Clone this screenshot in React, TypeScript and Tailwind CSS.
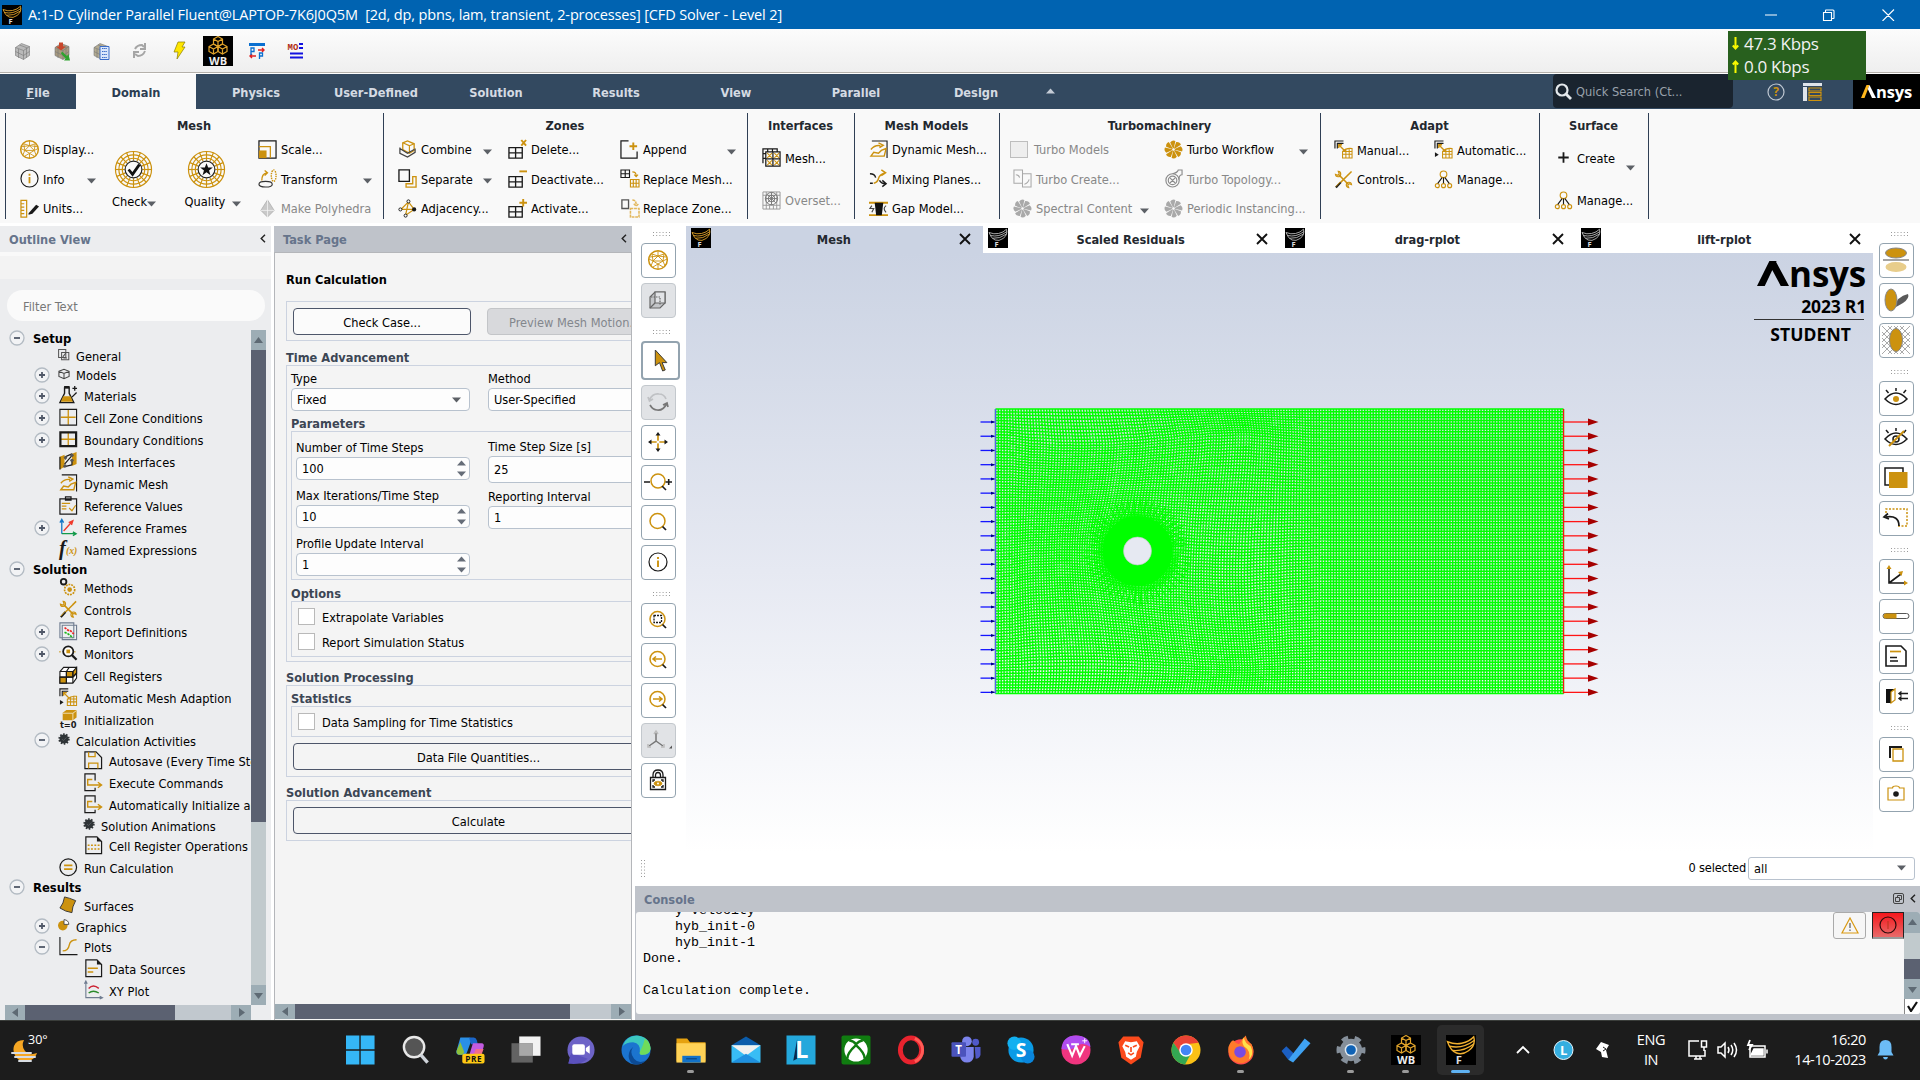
import React, { useMemo } from "react";

const G = "#cc920f";
const K = "#1a1a1a";

/* ---------- icon drawings, 20x20 box unless stated otherwise ---------- */
const Fan = ({ c }: { c: string }) => (
  <g fill={c}>
    {[0, 45, 90, 135, 180, 225, 270, 315].map((a) => (
      <path key={a} d="M10 10 L6.5 2.5 Q9 -0.5 12 1 Z" transform={`rotate(${a} 10 10)`} />
    ))}
    <circle cx="10" cy="10" r="1.3" fill="#f9f9f9" />
  </g>
);

const Web = ({ c = G }: { c?: string }) => (
  <g fill="none" stroke={c} strokeWidth="1.2">
    <circle cx="20" cy="20" r="18.5" />
    <circle cx="20" cy="20" r="15" />
    <circle cx="20" cy="20" r="11.5" />
    {Array.from({ length: 16 }, (_, i) => (
      <path key={i} d="M20 1.5 V11" transform={`rotate(${i * 22.5} 20 20)`} />
    ))}
    <circle cx="20" cy="20" r="8.6" fill="#fafafa" stroke="#222" />
  </g>
);

const Grid4 = (
  <path d="M1 8h14v11H1zM8 8v11M1 13.5h14" fill="none" stroke={K} strokeWidth="1.4" />
);

const AdaptShape = (
  <g fill="none">
    <path d="M1 9V1h9M3.5 9V3.5H10" stroke={K} strokeWidth="1.2" />
    <path d="M5 5l6 6M5 8.500V5h3.500" stroke={G} strokeWidth="1.4" />
    <path d="M9 19v-7q4-4 10-3v10zM9 15h10M12.500 9.500V19M16 8.500V19M9 12h10" stroke={G} strokeWidth="1.1" />
  </g>
);

const Tree3 = (
  <g fill="none" stroke={G} strokeWidth="1.2">
    <circle cx="10" cy="4.500" r="3.500" />
    <circle cx="3.500" cy="16.500" r="2.100" />
    <circle cx="10" cy="16.500" r="2.100" />
    <circle cx="16.500" cy="16.500" r="2.100" />
    <path d="M8.500 8L4 14M10 8v6M11.500 8L16 14" stroke={K} />
  </g>
);

const Tools = (
  <g fill="none" stroke={G} strokeWidth="1.6">
    <path d="M5 5l10 10M15.500 4.500L7 13" />
    <path d="M1.500 4.500a2.800 2.800 0 1 0 3-3l1 2.500-1.500 1.500zM18.500 15.500a2.800 2.800 0 1 0-3 3l-1-2.500 1.500-1.500z" strokeWidth="1.200" />
    <path d="M15 5l3.500-3.500" />
    <path d="M7 13l-5 5.500" stroke={K} strokeWidth="2.200" />
    <path d="M6.500 12.500l-4.500 5" stroke={G} strokeWidth="1" />
  </g>
);

const Bird = ({ c }: { c: string }) => (
  <g>
    <rect width="20" height="20" fill="#000" />
    <g fill="none" stroke={c} strokeWidth=".9">
      <path d="M1 4.500Q6 6.500 10.500 5.500Q15.500 4.500 18.500 1.200Q20 7 15 10.500Q11 13.500 7 12Q3 10.500 1 4.500z" />
      <path d="M2.500 7.500Q11 9.500 19 3.500M4.500 10.300Q12 11 18.500 6" />
    </g>
    <text x="6.500" y="19.300" fontSize="7.500" fontWeight="700" fill="#ddd" fontFamily="Open Sans, sans-serif">F</text>
  </g>
);

const Lens = (
  <g fill="none">
    <circle cx="9.500" cy="9" r="7.500" stroke={G} strokeWidth="1.500" />
    <path d="M14.500 14.500l3.500 3.500" stroke={K} strokeWidth="1.700" />
  </g>
);

const BallMesh = (
  <g fill="none" stroke={G}>
    <circle cx="10" cy="10" r="9.300" strokeWidth="1.500" />
    <path strokeWidth=".9" d="M4 4l6 2 6-2M10 1v5l-5 5-4-2M10 6l5 5 4-2M5 11l5 3 5-3H5M5 11l-2 5M15 11l2 5M10 14v5M10 14l-5 3M10 14l5 3M4 4l1 7M16 4l-1 7M2 7l8-1 8 1" />
  </g>
);

const DocFrame = <path d="M2 1h12l5 5v13H2z" fill="none" stroke={K} strokeWidth="1.300" />;
const Gear = (
  <g>
    <circle cx="10" cy="10" r="7.500" fill="#2f3437" />
    <circle cx="10" cy="10" r="8" fill="none" stroke="#2f3437" strokeWidth="3" strokeDasharray="2.600 2.426" />
    <path d="M6.500 10l2.500 2.500 5-5" stroke="#6b7175" strokeWidth="1" fill="none" />
  </g>
);

const DynMesh = (
  <g fill="none">
    <path d="M3 1h16v18" stroke={K} strokeWidth="1.200" />
    <path d="M2 10Q6 5 12 6M10 3l5 2.500L11 8M2 17L5 13l5 1 3-3 5-2-2 8z" stroke={G} strokeWidth="1.500" />
  </g>
);

const ICONS: Record<string, React.ReactNode> = {
  ball: BallMesh,
  info: (
    <g fill="none">
      <circle cx="10" cy="10" r="9" stroke={K} strokeWidth="1.200" />
      <path d="M10 8.500V15M10 5v2" stroke={G} strokeWidth="1.900" />
    </g>
  ),
  units: (
    <g fill="none">
      <path d="M1 1.500h6v17.500H1zM1 5h3.500M1 8.500h3.500M1 12h3.500M1 15.500h3.500" stroke={G} strokeWidth="1.300" />
      <path d="M9 15l8-9 3 2-7 7.500-4 1z" fill={K} />
    </g>
  ),
  scale: (
    <g fill="none">
      <path d="M1 1h18v18H1z" stroke={K} strokeWidth="1.300" />
      <path d="M1 7h12v12" stroke={G} strokeWidth="1.300" />
      <path d="M1 11h8v8H1z" fill={G} />
    </g>
  ),
  transform: (
    <g fill="none">
      <ellipse cx="8" cy="16" rx="7" ry="3" stroke="#333" strokeWidth="1.200" />
      <path d="M4 12Q4 5 9 4M7 1.500L10 4 7 7" stroke={G} strokeWidth="1.400" />
      <ellipse cx="16.500" cy="7" rx="2.500" ry="6" stroke={G} strokeWidth="1.500" strokeDasharray="1.500 1" />
    </g>
  ),
  poly: (
    <g stroke="#aaa" strokeWidth=".8">
      <path d="M10 1l7 11-7 7-7-7z" fill="#c9c9c9" />
      <path d="M10 1v18M3 12h14" fill="none" stroke="#f5f5f5" />
    </g>
  ),
  combine: (
    <g fill="none">
      <path d="M5 3l5-2 7 3v7l-5 3-7-4z" stroke={G} strokeWidth="1.400" />
      <path d="M5 3l7 3v7M12 6l5-2" stroke={G} strokeWidth="1.200" />
      <path d="M2 8v6l8 4 8-5v-4M2 9l8 5 7-4" stroke="#444" strokeWidth="1.300" />
    </g>
  ),
  separate: (
    <g fill="none">
      <path d="M1 1h11v12H1z" stroke={K} strokeWidth="1.400" />
      <path d="M15.500 8h3.500v11H8.500v-3.500h7z" stroke={G} strokeWidth="1.400" />
    </g>
  ),
  adjacency: (
    <g fill="none">
      <path d="M3 11h14M11 3L8 17M3 11l8-8 6 8-9 6" stroke={G} strokeWidth="1.300" />
      <g stroke={K} fill="#fff"><circle cx="2.500" cy="11" r="1.600" /><circle cx="11" cy="2.500" r="1.600" /><circle cx="8" cy="17.500" r="1.600" /></g>
      <circle cx="17" cy="11" r="2.200" fill={K} />
    </g>
  ),
  del: <g>{Grid4}<path d="M14 0l5 6M19 0l-5 6" stroke={G} strokeWidth="2" /></g>,
  deact: <g>{Grid4}<path d="M12 2.500h8" stroke={G} strokeWidth="2" /></g>,
  act: <g>{Grid4}<path d="M12 4h8M16 0v8" stroke={G} strokeWidth="2" /></g>,
  append: (
    <g fill="none">
      <path d="M9 1H1v18h17v-7" stroke={K} strokeWidth="1.300" />
      <path d="M10 6.500h8M14 2.500v8" stroke={G} strokeWidth="2" />
    </g>
  ),
  repmesh: (
    <g fill="none">
      <path d="M1 1h9v8H1zM5.500 1v8M1 5h9" stroke={K} strokeWidth="1.200" />
      <path d="M11 11h9v8h-9zM14 11v8M17 11v8M11 15h9M13 3q4 0 4 4M15 6l2 2 2-2" stroke={G} strokeWidth="1.200" />
    </g>
  ),
  repzone: (
    <g fill="none">
      <path d="M2 1h7v9H2z" stroke="#555" strokeWidth="1.400" />
      <path d="M13 1v0q4 0 4 5M14.500 5l2.500 2.500L19.500 5M11 10h9v9h-9z" stroke="#e2b75c" strokeWidth="1.600" strokeDasharray="3 .8" />
    </g>
  ),
  imesh: (
    <g fill="none">
      <path d="M1 16V1h15v3M4 4h15v15H4zM11.500 4v15M4 11.500h15M1 6h3M1 11h3M6 1v3M11 1v3" stroke={K} strokeWidth="1.300" />
      <path d="M5.500 5.500l5 5M10.500 5.500l-5 5M13 5.500l5 5M18 5.500l-5 5M5.500 13l5 5M10.500 13l-5 5M13 13l5 5M18 13l-5 5" stroke={G} strokeWidth="1.100" />
    </g>
  ),
  overset: (
    <g fill="none" stroke="#777" strokeWidth="1">
      <path d="M1 1h18v18H1zM1 4.500h18M1 15h18M4.500 1v18M8 15v4M12 15v4M15.500 1v18" stroke="#999" />
      <circle cx="10" cy="8" r="6.500" /><circle cx="10" cy="8" r="3.500" />
      <path d="M10 1.500v13M3.500 8h13M5.500 3.500l9 9M14.500 3.500l-9 9" />
    </g>
  ),
  dyn: DynMesh,
  mixing: (
    <g fill="none">
      <path d="M5 15q4-1 5-5t7-6M13 1l4.500 3-4.500 3" stroke={G} strokeWidth="1.500" />
      <path d="M1 5q5 0 6 4M11 12q2 3.500 6 3.500M14 12l4 3.500-4 3M1 15h3" stroke={K} strokeWidth="1.500" />
    </g>
  ),
  gap: (
    <g>
      <path d="M0 4h20M0 17h20" stroke={G} strokeWidth="2" />
      <path d="M6 4h9l-1.500 13h-6z" fill="#111" />
      <path d="M3 7l-2 3h4l-2 4M18 7q-4 3 0 7" stroke="#444" fill="none" strokeWidth="1.200" />
    </g>
  ),
  tcreate: (
    <g fill="none" stroke="#a9a9a9" strokeWidth="1.100">
      <path d="M1 1h9v14H1zM10 5h9v14h-9zM3 6q3 0 4 3M12 16q4-1 5-5" />
    </g>
  ),
  fanGray: <Fan c="#a9a9a9" />,
  fanGold: <Fan c={G} />,
  topo: (
    <g fill="none" stroke="#8b8b8b" strokeWidth="1.200">
      <ellipse cx="9" cy="12" rx="7" ry="7" /><circle cx="9" cy="12" r="4.500" />
      <path d="M9 5q5-1 6-4h4v5q-3 0-3.500 5M6 9l6 6M12 9l-6 6" />
    </g>
  ),
  adapt: AdaptShape,
  adaptAuto: <g>{AdaptShape}<path d="M1 13l4 2.500L1 18z" fill={K} /></g>,
  tools: Tools,
  tree3: Tree3,
  plus: <path d="M10 4.500v11M4.500 10h11" stroke={K} strokeWidth="1.900" />,
  general: (
    <g fill="none" stroke="#555" strokeWidth="1.700">
      <path d="M1 1h12v13H1zM6 6h12v12H6z" /><path d="M8 13l5-6M9 15h6" />
    </g>
  ),
  models: (
    <g fill="none" stroke="#444" strokeWidth="1.700">
      <path d="M1.500 5.500L10 2l8.500 3.500v8.500L10 18l-8.500-4zM1.500 5.500L10 9l8.500-3.500M10 9v9" />
    </g>
  ),
  materials: (
    <g fill="none">
      <path d="M6 2h5v6l5 10H1L6 8z" stroke={K} strokeWidth="1.500" />
      <path d="M4.500 11h8L15 17H2z" fill={G} />
      <path d="M5.500 0h6v2.500h-6z" fill={K} />
      <path d="M17 0v5M14.500 2.500h5M19 7l-5 5" stroke={K} strokeWidth="1.400" />
    </g>
  ),
  cellzone: (
    <g fill="none"><path d="M10 2v16M2 10h16" stroke={G} strokeWidth="1.400" /><path d="M1 1.500h18v17H1z" stroke={K} strokeWidth="1.200" /></g>
  ),
  boundary: (
    <g fill="none"><path d="M10 2v16M2 10h16" stroke={G} strokeWidth="1.400" /><path d="M1.500 2.500h17v15h-17z" stroke={K} strokeWidth="2.400" /></g>
  ),
  meshint: (
    <g>
      <path d="M1 5l5-2v13l-5 3zM14 2l5-2v13l-5 2z" fill={G} />
      <path d="M1 5v14M5 16l9-2M7 8V5l7-3M6 13L14 4M14 8v6" stroke={K} strokeWidth="1.300" fill="none" />
      <g fill="#555"><circle cx="7" cy="6" r="1.800" /><circle cx="14" cy="3.500" r="1.800" /><circle cx="6.500" cy="15" r="1.800" /><circle cx="14" cy="9" r="1.800" /></g>
    </g>
  ),
  refval: (
    <g fill="none">
      <path d="M1 3h18v16.500H1zM7 1h6v3.500H7z" stroke={K} strokeWidth="1.300" />
      <path d="M3 8h9M3 11h5M3 14h5M11 13l3 3 4-6" stroke={G} strokeWidth="1.300" />
    </g>
  ),
  frames: (
    <g fill="none" strokeWidth="1.400">
      <path d="M3 17V3M1 5l2-3.500L5 5" stroke="#1578c8" />
      <path d="M3 17h14M15 15l3.500 2-3.500 2" stroke="#129a4a" />
      <path d="M5 14L14 4M10.500 5L15 3l-1.500 4.500" stroke="#f0392b" />
    </g>
  ),
  fx: (
    <g fontFamily="Liberation Serif, serif" fontStyle="italic">
      <text x="0" y="16" fontSize="22" fontWeight="700" fill={K}>f</text>
      <text x="7.500" y="15" fontSize="10.500" fontWeight="700" fill={G}>(x)</text>
    </g>
  ),
  methods: (
    <g fill="none">
      <circle cx="5" cy="4" r="3" stroke={K} strokeWidth="2" />
      <circle cx="11.500" cy="12.500" r="5.500" stroke={G} strokeWidth="1.800" strokeDasharray="2 1" />
      <circle cx="11.500" cy="12.500" r="2.500" fill={G} />
    </g>
  ),
  report: (
    <g fill="none">
      <path d="M1 1h15v16H1zM3.500 3.500H19V19H3.500z" fill="#eef0f2" stroke="#6f7c90" strokeWidth="1.200" />
      <path d="M6 6l4 3 2 0 4 4" stroke="#ee2222" strokeWidth="1.800" strokeDasharray="2.500 1" />
      <path d="M6 11l4 2 5 4" stroke="#1eb51e" strokeWidth="1.800" strokeDasharray="2.500 1" />
    </g>
  ),
  monitors: (
    <g fill="none">
      <path d="M0 8.500h20" stroke={G} strokeWidth="1" strokeDasharray="2 2" />
      <circle cx="10" cy="8" r="5.500" fill="#fff" stroke={K} strokeWidth="1.900" />
      <path d="M14 12l5 5" stroke={K} strokeWidth="2.400" /><path d="M8 6h4v4H8z" fill={G} />
    </g>
  ),
  cellreg: (
    <g stroke={K} strokeWidth="1.200">
      <path d="M1 6l4-4.500h14V13l-4 5.500H1z" fill="#fff" />
      <path d="M8 6h7v6H8zM1 12h7v6.500H1zM15 6l4-4.500V8l-4 4z" fill={G} />
      <path d="M1 6h14v12.500M8 6v12.500M1 12h14M8 6l3-4.500M15 12l4-4.500" fill="none" />
    </g>
  ),
  init: (
    <g>
      <path d="M4 3l4-3h11v8l-4 3H4z" fill={G} /><path d="M4 3.500h11l4-3M15 3.500V11" stroke="#f2e2b8" fill="none" />
      <text x="1" y="19.500" fontSize="9" fontWeight="700" fill={K} fontFamily="DejaVu Sans, sans-serif" textLength="18">t=0</text>
    </g>
  ),
  gear: Gear,
  save: (
    <g fill="none"><path d="M1 1h12l6 6v12H1z" stroke={K} strokeWidth="1.300" /><path d="M5 1v5h7V1M5 19v-6h10v6" stroke={G} strokeWidth="1.400" /></g>
  ),
  exec: (
    <g fill="none"><path d="M12 8V1H1v18h11v-3" stroke={K} strokeWidth="1.300" /><path d="M9 7H4v6h14M15 10l4 3-4 3" stroke={G} strokeWidth="1.500" /></g>
  ),
  cellops: (
    <g>{DocFrame}<path d="M14 1l5 5h-5z" fill={K} /><path d="M4 10h13M4 14h13" stroke={G} strokeWidth="1.600" strokeDasharray="2 1.600" /></g>
  ),
  run: (
    <g fill="none"><circle cx="10" cy="10" r="9" stroke={K} strokeWidth="1.300" /><path d="M5.500 8h9M5.500 12h9" stroke={G} strokeWidth="1.900" /></g>
  ),
  surfaces: <path d="M6 1q5 1 12 4-4 7-4 13-7-1-13-5Q5 8 6 1z" fill={G} stroke="#333" strokeWidth="1" />,
  graphics: (
    <g><circle cx="8" cy="11" r="8" fill={G} /><path d="M10 1v8h8q0-7-8-8z" fill="#fff" stroke="#444" strokeWidth="1.500" /></g>
  ),
  plots: (
    <g fill="none"><path d="M1 0v19h19" stroke={K} strokeWidth="1.200" /><path d="M4 15q6 0 7-6t8-6" stroke={G} strokeWidth="1.500" /></g>
  ),
  datasrc: <g>{DocFrame}<path d="M14 1l5 5h-5z" fill={K} /><path d="M4 10h11M4 14h6" stroke={G} strokeWidth="1.700" /></g>,
  xy: (
    <g fill="none">
      <path d="M2 1v17h17M.5 3L2 0l1.500 3M17 16.500l3 1.500-3 1.500" stroke="#6f7c90" strokeWidth="1.200" />
      <path d="M5 8q5-5 11 0" stroke="#c23" strokeWidth="1.500" /><path d="M5 13q5-4 11 0" stroke="#2a8a2a" strokeWidth="1.500" />
    </g>
  ),
  cube: (
    <g fill="none" stroke="#666" strokeWidth="1.200">
      <path d="M2 7v11h10l5-5V2H7z" fill="#c4c6c9" /><path d="M7 2h10v11H7z" fill="#e1e3e6" /><path d="M2 18l5-5" /><path d="M3 7h9v8" strokeDasharray="1.500 1" />
    </g>
  ),
  cursor: <path d="M6 0v15l4-3 3 8 2.500-1-3-7H17z" fill={G} stroke="#333" strokeWidth=".9" />,
  rotate: (
    <g fill="none" strokeWidth="1.700"><path d="M1.500 7.500Q5 1 11 2q5 0 7 5M0 5l1.500 4L5 7" stroke="#bfc1c4" /><path d="M18.500 12Q15 19 9 18q-4 0-7-5M15 13l4-2 1 4" stroke="#777" /></g>
  ),
  move: (
    <g><path d="M10 3v14M3 10h14" stroke={G} strokeWidth="1.700" /><circle cx="10" cy="10" r="1.500" fill="#fff" /><path d="M10 0l2.500 3.500h-5zM10 20l2.500-3.500h-5zM0 10l3.500-2.500v5zM20 10l-3.500-2.500v5z" fill={K} /></g>
  ),
  zoomio: (
    <g fill="none"><circle cx="10" cy="9" r="7" stroke={G} strokeWidth="1.500" /><path d="M14 14l4 4M-4 10h6M17.500 10h6.500M20.700 7v6" stroke={K} strokeWidth="1.600" /></g>
  ),
  lens: Lens,
  lensbox: <g>{Lens}<path d="M6 5.500h7.500v7H6z" fill="none" stroke={K} strokeWidth="1.300" strokeDasharray="2 1" /></g>,
  lensl: <g>{Lens}<path d="M14 9H5M8 6.500L5 9l3 2.500" fill="none" stroke={G} strokeWidth="1.500" /></g>,
  lensr: <g>{Lens}<path d="M5 9h9M11 6.500L14 9l-3 2.500" fill="none" stroke={G} strokeWidth="1.500" /></g>,
  triad: (
    <g fill="none" stroke="#777" strokeWidth="1.500"><path d="M8 3v8L1 16M8 11l7 5" /><path d="M6 4l2-3 2 3M0 14v3h3M13 17h3v-3" stroke="#bbb" /><path d="M24 15.500v3h-3z" fill="#555" stroke="none" /></g>
  ),
  lock: (
    <g fill="none" stroke={K} strokeWidth="1.300"><path d="M2.500 7.500h15v12h-15zM5 7V5q0-5 5-5t5 5v2M7.500 7V5.500q0-3 2.500-3t2.500 3V7" /><path d="M5 12v-2h2M13 10h2v2M5 15v2h2M13 17h2v-2" /><ellipse cx="10" cy="13.500" rx="4" ry="2.300" fill={G} stroke={G} strokeWidth=".6" /><circle cx="10" cy="13.500" r="1" fill="#fff" stroke="none" /></g>
  ),
  reflect: (
    <g><ellipse cx="10" cy="3" rx="10.500" ry="5" fill={G} stroke="#888" /><path d="M-3 10h26" stroke="#666" strokeWidth="1.200" /><ellipse cx="10" cy="17" rx="10.500" ry="5" fill="#e8cd8b" /></g>
  ),
  shadow: (
    <g><path d="M8 18q3-12 14-14 2 4-5 9-5 3-9 5z" fill="#5a5a5a" /><ellipse cx="5" cy="10" rx="6" ry="11" fill={G} stroke="#888" /></g>
  ),
  trans: (
    <g><path d="M-4-4l28 28M2-4l22 22M8-4l16 16M14-4l10 10M-4 2l22 22M-4 8l16 16M-4 14l10 10M24-4L-4 24M18-4L-4 18M12-4L-4 12M6-4L-4 6M24 2L2 24M24 8L8 24M24 14L14 24" stroke="#aaa" strokeWidth="1" /><ellipse cx="10" cy="10" rx="6.500" ry="11.500" fill={G} stroke="#888" /></g>
  ),
  eye: (
    <g fill="none" stroke={K} strokeWidth="1.500"><path d="M-1 11q11-12 22 0-11 11-22 0z" /><circle cx="10" cy="11" r="3" fill={G} stroke="none" /><path d="M10 0v3M0 2l2.500 3M20 2l-2.500 3" /></g>
  ),
  eyeoff: (
    <g fill="none" stroke={K} strokeWidth="1.500"><path d="M-1 11q11-12 22 0-11 11-22 0z" /><circle cx="10" cy="11" r="3" /><path d="M10 0v3M0 2l2.500 3M20 2l-2.500 3" /><path d="M3 18L18 3" stroke={G} strokeWidth="2" /></g>
  ),
  squares: <g><path d="M-1 0h18v17H-1z" fill="none" stroke={K} strokeWidth="1.500" /><path d="M3 4h18.500v16H3z" fill={G} /></g>,
  undo: (
    <g fill="none"><path d="M0 5V1h21v17h-9" stroke={G} strokeWidth="1.500" strokeDasharray="2 1.500" /><path d="M0 9q13-2 13 9M2 5.500L-2 9l5 2" stroke={K} strokeWidth="1.700" /></g>
  ),
  axes: (
    <g fill="none" stroke={K} strokeWidth="1.600"><path d="M3 3v14h15M3 17l12-9" /><path d="M3-1l2.500 4h-5zM22 17l-4 2.500v-5zM17 5l-5 1 3.500 4z" fill={G} stroke="none" /></g>
  ),
  bar: (
    <g><rect x="-3" y="7.500" width="26" height="5" rx="2.500" fill="#fff" stroke="#555" /><path d="M0 7.500h10.500v5H0a2.500 2.500 0 0 1 0-5z" fill={G} /></g>
  ),
  note: <g fill="none"><path d="M0 0h15l5 5v15H0z" stroke={K} strokeWidth="1.600" /><path d="M4 5.500h11" stroke={G} strokeWidth="1.700" /><path d="M4 11.500h7M4 15h8" stroke={K} strokeWidth="1.300" /></g>,
  book: (
    <g><path d="M0 3h5v14H0zM0 3h9v3H5v11H0z" fill="#111" /><path d="M5 6l4-3v11l-4 3z" fill="#fff" stroke={G} strokeWidth="1.200" /><path d="M22 7.500h-9M15.500 5.500L13 7.500l2.500 2M22 12.500h-9M15.500 10.500l-2.500 2 2.500 2" stroke={K} strokeWidth="1.400" fill="none" /></g>
  ),
  copy: <g fill="none"><path d="M4 14V3h12" stroke={K} strokeWidth="2" /><path d="M7 5h10v12H7z" stroke={G} strokeWidth="1.300" /></g>,
  camera: <g fill="none"><path d="M2 4h4.500q0-2 3.500-2t3.500 2H18v12H2z" stroke={G} strokeWidth="1.200" /><circle cx="10" cy="10" r="2.800" fill={K} /></g>,
};

const I = ({ n, s = 20 }: { n: string; s?: number }) => (
  <svg width={s} height={s} viewBox="0 0 20 20" className="shrink-0 overflow-visible">{ICONS[n]}</svg>
);

const Caret = ({ cls = "" }: { cls?: string }) => (
  <svg width="9" height="6" viewBox="0 0 9 6" className={"shrink-0 " + cls}><path d="M0 .5h9L4.500 5.500z" fill="#5c6066" /></svg>
);

/* ---------- ribbon ---------- */
type Item = { i?: string; t: string; off?: boolean; caret?: number; check?: boolean };

const RibItem = ({ i, t, off, caret, check }: Item) => (
  <div className="flex h-[29.5px] items-center whitespace-nowrap">
    {check ? <span className="mr-[6px] h-[17px] w-[18px] shrink-0 border border-[#bdbdbd] bg-[#eeeeee]" /> : <span className="mr-[4px] flex w-5 justify-center"><I n={i!} s={19} /></span>}
    <span className={"mt-[2px] " + (off ? "text-[#888]" : "text-black")} style={caret ? { width: caret - 24 } : undefined}>{t}</span>
    {caret && <Caret cls="mt-[5px]" />}
  </div>
);

const Group = ({ title, w, children }: { title: string; w: number; children?: React.ReactNode }) => (
  <div className="flex h-[110px] shrink-0" style={{ width: w }}>
    <div className="h-[106px] w-px shrink-0 bg-[#2f3f55]" />
    <div className="flex flex-1 flex-col">
      <div className="flex h-[22px] items-end justify-center pr-px text-[12.700px] font-bold leading-[19px] text-[#23282f]">{title}</div>
      <div className="flex">{children}</div>
    </div>
  </div>
);

const Col = ({ w, items, ml = 0 }: { w: number; items: Item[]; ml?: number }) => (
  <div className="shrink-0" style={{ width: w, marginLeft: ml }}>
    {items.map((x) => <RibItem key={x.t} {...x} />)}
  </div>
);

const BigBtn = ({ t, w, children, gap }: { t: string; w: number; gap: string; children: React.ReactNode }) => (
  <div className="flex shrink-0 flex-col items-center pt-[15px]" style={{ width: w }}>
    <svg width="39" height="39" viewBox="0 0 40 40"><Web />{children}</svg>
    <div className={"mt-[5px] flex items-center whitespace-nowrap leading-[16px] " + gap}>{t}<Caret cls="mt-[5px]" /></div>
  </div>
);

const Ribbon = () => (
  <div className="flex h-[114px] bg-[#f9f9f9] pl-[5px] pt-[4px]">
    <Group title="Mesh" w={378}>
      <Col ml={13} w={83} items={[{ i: "ball", t: "Display..." }, { i: "info", t: "Info", caret: 68 }, { i: "units", t: "Units..." }]} />
      <BigBtn t="Check" w={62} gap="pl-[2px]"><path d="M15 20l4 5 7-10" stroke="#111" strokeWidth="2.800" fill="none" /></BigBtn>
      <BigBtn t="Quality" w={84} gap="gap-[7px] pl-[14px]"><path d="M20 13.500l1.700 4.500h4.800l-3.900 3 1.500 4.800-4.100-2.900-4.100 2.900 1.500-4.800-3.900-3h4.800z" fill="#111" /></BigBtn>
      <Col ml={9} w={125} items={[{ i: "scale", t: "Scale..." }, { i: "transform", t: "Transform", caret: 106 }, { i: "poly", t: "Make Polyhedra", off: true }]} />
    </Group>
    <Group title="Zones" w={364}>
      <Col ml={13} w={110} items={[{ i: "combine", t: "Combine", caret: 86 }, { i: "separate", t: "Separate", caret: 86 }, { i: "adjacency", t: "Adjacency..." }]} />
      <Col w={112} items={[{ i: "del", t: "Delete..." }, { i: "deact", t: "Deactivate..." }, { i: "act", t: "Activate..." }]} />
      <Col w={120} items={[{ i: "append", t: "Append", caret: 108 }, { i: "repmesh", t: "Replace Mesh..." }, { i: "repzone", t: "Replace Zone..." }]} />
    </Group>
    <Group title="Interfaces" w={107}>
      <div className="ml-[13px] flex flex-col gap-[13px] pt-[8px]">
        <RibItem i="imesh" t="Mesh..." />
        <RibItem i="overset" t="Overset..." off />
      </div>
    </Group>
    <Group title="Mesh Models" w={145}>
      <Col ml={13} w={125} items={[{ i: "dyn", t: "Dynamic Mesh..." }, { i: "mixing", t: "Mixing Planes..." }, { i: "gap", t: "Gap Model..." }]} />
    </Group>
    <Group title="Turbomachinery" w={321}>
      <div className="ml-[10px] w-[153px] shrink-0">
        <RibItem check t="Turbo Models" off />
        <div className="pl-[2px]"><RibItem i="tcreate" t="Turbo Create..." off /><RibItem i="fanGray" t="Spectral Content" off caret={128} /></div>
      </div>
      <Col w={150} items={[{ i: "fanGold", t: "Turbo Workflow", caret: 136 }, { i: "topo", t: "Turbo Topology...", off: true }, { i: "fanGray", t: "Periodic Instancing...", off: true }]} />
    </Group>
    <Group title="Adapt" w={219}>
      <Col ml={12} w={100} items={[{ i: "adapt", t: "Manual..." }, { i: "tools", t: "Controls..." }]} />
      <Col w={105} items={[{ i: "adaptAuto", t: "Automatic..." }, { i: "tree3", t: "Manage..." }]} />
    </Group>
    <Group title="Surface" w={109}>
      <div className="ml-[13px] flex flex-col gap-[13px] pt-[8px]">
        <div className="flex items-center"><RibItem i="plus" t="Create" /><Caret cls="ml-[11px] mt-[20px]" /></div>
        <RibItem i="tree3" t="Manage..." />
      </div>
    </Group>
    <div className="h-[106px] w-px bg-[#2f3f55]" />
  </div>
);

/* ---------- outline tree ---------- */
type Row = [number, number, string, string, string, boolean?];
// level, row height, expander, icon, label, small icon
const ROWS: Row[] = [
  [0, 18, "-", "", "Setup"],
  [1, 18, "", "general", "General", true],
  [1, 20, "+", "models", "Models", true],
  [1, 22, "+", "materials", "Materials"],
  [1, 22, "+", "cellzone", "Cell Zone Conditions"],
  [1, 22, "+", "boundary", "Boundary Conditions"],
  [1, 22, "", "meshint", "Mesh Interfaces"],
  [1, 22, "", "dyn", "Dynamic Mesh"],
  [1, 22, "", "refval", "Reference Values"],
  [1, 22, "+", "frames", "Reference Frames"],
  [1, 22, "", "fx", "Named Expressions"],
  [0, 16, "-", "", "Solution"],
  [1, 22, "", "methods", "Methods"],
  [1, 22, "", "tools", "Controls"],
  [1, 22, "+", "report", "Report Definitions"],
  [1, 22, "+", "monitors", "Monitors"],
  [1, 22, "", "cellreg", "Cell Registers"],
  [1, 22, "", "adaptAuto", "Automatic Mesh Adaption"],
  [1, 22, "", "init", "Initialization"],
  [1, 19, "-", "gear", "Calculation Activities", true],
  [2, 22, "", "save", "Autosave (Every Time Steps)"],
  [2, 22, "", "exec", "Execute Commands"],
  [2, 22, "", "exec", "Automatically Initialize and Modify"],
  [2, 19, "", "gear", "Solution Animations", true],
  [2, 22, "", "cellops", "Cell Register Operations"],
  [1, 22, "", "run", "Run Calculation"],
  [0, 16, "-", "", "Results"],
  [1, 22, "", "surfaces", "Surfaces"],
  [1, 19, "+", "graphics", "Graphics", true],
  [1, 22, "-", "plots", "Plots"],
  [2, 22, "", "datasrc", "Data Sources"],
  [2, 22, "", "xy", "XY Plot"],
];

const Expander = ({ k }: { k: string }) => (
  <svg width="16" height="16" viewBox="0 0 16 16" className="shrink-0">
    {k && (
      <g fill="none">
        <circle cx="8" cy="8" r="7" stroke="#b3bbc3" strokeWidth="1.300" fill="#f2f3f5" />
        <path d={k === "+" ? "M5 8h6M8 5v6" : "M5 8h6"} stroke="#505868" strokeWidth="1.800" />
      </g>
    )}
  </svg>
);

const TreeRow = ({ r }: { r: Row }) => {
  const [lvl, h, ex, ic, label, small] = r;
  return (
    <div className="flex shrink-0 items-center whitespace-nowrap" style={{ height: h, paddingLeft: lvl === 0 ? 9 : lvl === 1 ? 34 : 59 }}>
      <span className="-mt-[1px] flex"><Expander k={ex} /></span>
      {lvl === 0 ? (
        <b className="ml-[8px] mt-[2px] text-[12.900px] text-black">{label}</b>
      ) : (
        <>
          <span className={small ? "-mt-[3px] ml-[8px] mr-[6px] flex" : "-mt-[1px] ml-[8.500px] mr-[7px] flex"}><I n={ic} s={small ? 12 : 18.5} /></span>
          <span className="mt-[2px] tracking-[0.030px] text-black">{label}</span>
        </>
      )}
    </div>
  );
};

const Arrow = ({ d }: { d: "l" | "r" | "u" | "d" }) => {
  const p = { l: "M7 0v9L1 4.500z", r: "M2 0v9l6-4.500z", u: "M0 7h9L4.500 1z", d: "M0 2h9L4.500 8z" }[d];
  return <svg width="9" height="9" viewBox="0 0 9 9"><path d={p} fill="#5e6a74" /></svg>;
};

const HScroll = ({ thumb, rest, cls }: { thumb: number; rest: number; cls: string }) => (
  <div className={"flex h-[15px] " + cls}>
    <div className="flex w-5 items-center justify-center bg-[#9dadb5]"><Arrow d="l" /></div>
    <div className="bg-[#5b6171]" style={{ width: thumb }} />
    <div className="bg-[#c1c8ce]" style={{ width: rest }} />
    <div className="flex w-5 items-center justify-center bg-[#9dadb5]"><Arrow d="r" /></div>
  </div>
);

const Chev = ({ cls = "" }: { cls?: string }) => (
  <svg width="6" height="9" viewBox="0 0 6 9" className={cls}><path d="M5 .8L1.200 4.500 5 8.200" fill="none" stroke="#222" strokeWidth="1.400" /></svg>
);

const Outline = () => (
  <div className="flex w-[271px] shrink-0 flex-col bg-[#ecedef]">
    <div className="flex h-[26px] items-center justify-between pl-[9px] pr-[5px] font-bold text-[#66748b]"><span className="mt-px">Outline View</span><Chev cls="-mt-px" /></div>
    <div className="h-[4px] bg-[#f9f9f9]" />
    <div className="h-[23px] bg-[#f3f3f3]" />
    <div className="ml-[7px] mt-[11px] flex h-[31px] w-[258px] items-center rounded-full bg-[#fafafa] pl-4 pt-[2px] text-[#777]">Filter Text</div>
    <div className="mt-[8px] flex h-[676px]">
      <div className="flex w-[251px] shrink-0 flex-col overflow-hidden">
        {ROWS.map((r) => <TreeRow key={r[4]} r={r} />)}
      </div>
      <div className="flex w-[15px] flex-col">
        <div className="mt-px flex h-5 items-center justify-center bg-[#9dadb5]"><Arrow d="u" /></div>
        <div className="h-[472px] bg-[#5b6171]" />
        <div className="flex-1 bg-[#c1cacd]" />
        <div className="flex h-5 items-center justify-center bg-[#9dadb5]"><Arrow d="d" /></div>
      </div>
    </div>
    <HScroll cls="ml-[5px]" thumb={150} rest={56} />
  </div>
);

/* ---------- task page ---------- */
const field = "flex shrink-0 items-center rounded-[4px] border border-[#b8c2ce] bg-[#fdfdfd] pl-[5px]";

const Spin = ({ v }: { v: string }) => (
  <div className={field + " h-[23px] w-[174px] justify-between pr-[3px]"}>
    <span className="mt-px">{v}</span>
    <span className="flex flex-col gap-[5px]">
      <svg width="9" height="6"><path d="M0 5.500h9L4.500.5z" fill="#666d78" /></svg>
      <svg width="9" height="6"><path d="M0 .5h9L4.500 5.500z" fill="#666d78" /></svg>
    </span>
  </div>
);

const Check = ({ t }: { t: string }) => (
  <div className="flex h-[25px] items-center"><span className="mr-[7px] h-[17px] w-[17px] border border-[#b9b9b9] bg-white" /><span className="mt-[2px]">{t}</span></div>
);

const Head = ({ t, cls }: { t: string; cls: string }) => (
  <div className={"flex items-end font-bold leading-[15px] text-[#3c4654] " + cls}>{t}</div>
);

const box = "border border-r-0 border-[#ccd3e0]";
const wideBtn = "flex h-[27px] w-[371px] items-center justify-center rounded-[4px] border border-[#4d566a] bg-[#f4f4f4] pt-[2px]";

const TaskPage = () => (
  <div className="ml-[3px] flex w-[358px] shrink-0 flex-col">
    <div className="flex h-[26px] items-center justify-between bg-[#bfc3ca] pl-[9px] pr-[5px] font-bold text-[#66748b]"><span className="mt-px">Task Page</span><Chev cls="-mt-px" /></div>
    <div className="flex h-[768px] flex-col overflow-hidden whitespace-nowrap border border-b-0 border-[#b4b6ba] bg-[#f4f4f4]">
      <div className="ml-[11px] flex h-[751px] shrink-0 flex-col">
        <div className="mt-[18px] h-[18px] font-bold leading-[18px] text-black">Run Calculation</div>
        <div className={box + " mt-[12px] flex h-[40px] shrink-0 gap-[16px] pl-[6px] pt-[6px]"}>
          <div className="flex h-[27px] w-[178px] shrink-0 items-center justify-center rounded-[4px] border border-[#4d566a] bg-[#fbfbfb] pt-[2px]">Check Case...</div>
          <div className="flex h-[27px] w-[176px] shrink-0 items-center rounded-[4px] border border-[#c3c5c8] bg-[#d8d9dc] pl-[21px] pt-[2px] text-[#83878d]">Preview Mesh Motion...</div>
        </div>
        <Head t="Time Advancement" cls="h-[24px]" />
        <div className={box + " flex h-[297px] shrink-0 flex-col pl-[4px]"}>
          <div className="flex pt-[4px]">
            <div className="w-[197px] shrink-0">
              <div className="h-[18px] leading-[18px]">Type</div>
              <div className={field + " h-[23px] w-[179px] justify-between pr-[8px]"}><span className="mt-px">Fixed</span><Caret /></div>
            </div>
            <div className="shrink-0">
              <div className="h-[18px] leading-[18px]">Method</div>
              <div className={field + " h-[23px] w-[179px]"}><span className="mt-px">User-Specified</span></div>
            </div>
          </div>
          <Head t="Parameters" cls="h-[20px]" />
          <div className={box + " flex h-[149px] shrink-0 pl-[4px]"}>
            <div className="w-[192px] shrink-0">
              <div className="mt-[6px] h-[19px] leading-[20px]">Number of Time Steps</div><Spin v="100" />
              <div className="h-[25px] pt-[6px] leading-[20px]">Max Iterations/Time Step</div><Spin v="10" />
              <div className="h-[25px] pt-[6px] leading-[20px]">Profile Update Interval</div><Spin v="1" />
            </div>
            <div className="shrink-0">
              <div className="mt-[5px] h-[19px] leading-[20px]">Time Step Size [s]</div>
              <div className={field + " h-[27px] w-[179px]"}><span className="mt-px">25</span></div>
              <div className="h-[23px] pt-[4px] leading-[20px]">Reporting Interval</div>
              <div className={field + " h-[23px] w-[179px]"}><span className="mt-px">1</span></div>
            </div>
          </div>
          <Head t="Options" cls="h-[21px]" />
          <div className={box + " h-[56px] shrink-0 pl-[6px] pt-[2px]"}><Check t="Extrapolate Variables" /><Check t="Report Simulation Status" /></div>
        </div>
        <Head t="Solution Processing" cls="h-[23px]" />
        <div className={box + " flex h-[92px] shrink-0 flex-col pl-[4px]"}>
          <Head t="Statistics" cls="h-[20px]" />
          <div className={box + " h-[31px] shrink-0 pl-[6px] pt-[2px]"}><Check t="Data Sampling for Time Statistics" /></div>
          <div className={wideBtn + " ml-[2px] mt-[6px] shrink-0"}>Data File Quantities...</div>
        </div>
        <Head t="Solution Advancement" cls="h-[23px]" />
        <div className={box + " h-[41px] shrink-0 pl-[6px] pt-[6px]"}><div className={wideBtn}>Calculate</div></div>
      </div>
      <HScroll cls="" thumb={275} rest={41} />
    </div>
  </div>
);

/* ---------- tool columns ---------- */
const Grip = () => (
  <svg width="17" height="4" viewBox="0 0 17 4">
    <path d="M0 .5h17M0 3.500h17" stroke="#9a9a9a" strokeDasharray="1 2.200" />
  </svg>
);

const Tool = ({ n, off }: { n: string; off?: boolean }) => (
  <div className={"flex h-[35px] w-[35px] shrink-0 items-center justify-center rounded-[4px] border pb-px pr-px " + (off ? "border-[#c3c8cd] bg-[#e1e3e6]" : "border-[#93a3af] bg-white")}>
    <I n={n} />
  </div>
);

const GripRow = ({ first }: { first?: boolean }) => (
  <div className={"flex w-[41px] items-center justify-center " + (first ? "-mb-[5px] h-[17px] pb-[2px]" : "h-[13px] pt-[4px]")}><Grip /></div>
);

const LeftTools = () => (
  <div className="flex w-[54px] shrink-0 flex-col gap-[5px] bg-white pl-[9px]">
    <GripRow first />
    <Tool n="ball" /><Tool n="cube" off />
    <GripRow />
    <div className="flex h-[39px] w-[39px] shrink-0 items-center justify-center rounded-[4px] border-[2.500px] border-[#93a3af] bg-white pr-[3px]"><I n="cursor" s={21} /></div>
    <Tool n="rotate" off /><Tool n="move" /><Tool n="zoomio" /><Tool n="lens" /><Tool n="info" />
    <GripRow />
    <Tool n="lensbox" /><Tool n="lensl" /><Tool n="lensr" /><Tool n="triad" off /><Tool n="lock" />
  </div>
);

const RightTools = () => (
  <div className="flex w-[47px] shrink-0 flex-col gap-[5px] bg-white pl-[6px]">
    <GripRow first />
    <Tool n="reflect" /><Tool n="shadow" /><Tool n="trans" />
    <GripRow />
    <Tool n="eye" /><Tool n="eyeoff" /><Tool n="squares" /><Tool n="undo" />
    <GripRow />
    <Tool n="axes" /><Tool n="bar" /><Tool n="note" /><Tool n="book" />
    <GripRow />
    <Tool n="copy" /><Tool n="camera" />
  </div>
);

/* ---------- mesh viewport, origin at (686, 253) ---------- */
const X0 = 309.5, X1 = 877.5, Y0 = 156, Y1 = 440.5, CX = 451.5, CY = 298, CR = 14;

// Bends the regular lattice around the cylinder and relaxes it toward the outlet.
function warp(x: number, y: number): [number, number] {
  const dx = x - CX, dy = y - CY;
  const r = Math.hypot(dx, dy) || 0.01;
  const edge = Math.min(1, (x - X0) / 30, (y - Y0) / 30, (Y1 - y) / 30);
  const k = Math.max(0, edge) * Math.max(0, 1 - Math.max(0, x - 560) / 90);
  const push = 7 * Math.exp(-((r / 50) ** 2)) * k;
  const u = (x - X0) / 330, v = (y - Y0) / (Y1 - Y0);
  const wx = 6 * Math.sin(2 * Math.PI * v + 1.2) * Math.sin(Math.PI * u) * k;
  const wy = 6 * Math.sin(2 * Math.PI * u) * Math.cos(Math.PI * v * 1.5) * k;
  return [x + (dx / r) * push + wx, y + (dy / r) * push + wy];
}

const Viewport = () => {
  const { grid, rings } = useMemo(() => {
    let grid = "";
    for (let i = 0; i <= 200; i++) {
      const x = X0 + ((X1 - X0) * i) / 200;
      for (let j = 0; j <= 48; j++) {
        const [a, b] = warp(x, Y0 + ((Y1 - Y0) * j) / 48);
        grid += (j ? "L" : "M") + a.toFixed(1) + " " + b.toFixed(1);
      }
    }
    for (let j = 0; j <= 100; j++) {
      const y = Y0 + ((Y1 - Y0) * j) / 100;
      for (let i = 0; i <= 90; i++) {
        const [a, b] = warp(X0 + ((X1 - X0) * i) / 90, y);
        grid += (i ? "L" : "M") + a.toFixed(1) + " " + b.toFixed(1);
      }
    }
    let rings = "";
    for (let i = 0; i < 150; i++) {
      const t = (i / 150) * Math.PI * 2, R = 46 + 8 * Math.cos(i * 2.1);
      rings += `M${(CX + CR * Math.cos(t)).toFixed(1)} ${(CY + CR * Math.sin(t)).toFixed(1)}L${(CX + R * Math.cos(t)).toFixed(1)} ${(CY + R * Math.sin(t)).toFixed(1)}`;
    }
    return { grid, rings };
  }, []);
  const ys = Array.from({ length: 20 }, (_, i) => 169 + i * 14.23);
  return (
    <svg width="1187" height="600" className="block">
      <path d={grid} fill="none" stroke="#00ff00" strokeWidth="1.450" />
      <path d={rings} fill="none" stroke="#00ff00" strokeWidth="1.100" />
      <circle cx={CX} cy={CY} r="35" fill="#00ff00" />
      <circle cx={CX} cy={CY} r={CR} fill="#e6e9f2" stroke="#b9c9bd" strokeWidth=".6" />
      <path d={`M${X0} ${Y0}V${Y1}`} stroke="#5a5af5" strokeWidth="1.300" />
      <path d={`M${X1} ${Y0}V${Y1}`} stroke="#ff1010" strokeWidth="1.200" />
      {ys.map((y) => (
        <g key={y}>
          <path d={`M294.500 ${y}h14`} stroke="#1414ff" strokeWidth="1.300" />
          <path d={`M305 ${y - 1.5}l4 1.500-4 1.500z`} fill="#000080" />
          <path d={`M878 ${y}h26`} stroke="#ff1414" strokeWidth="1.300" />
          <path d={`M902 ${y - 3.5}l10.500 3.500-10.500 3.500z`} fill="#a50000" />
        </g>
      ))}
    </svg>
  );
};

const Tab = ({ t, active }: { t: string; active?: boolean }) => (
  <div className={"flex flex-1 items-center pl-[5px] pr-[12px] " + (active ? "bg-[#cbd3e3]" : "bg-white")}>
    <svg width="20" height="20" viewBox="0 0 20 20" className="-mt-[3px]"><Bird c={active ? "#e0a32a" : "#b9b9b9"} /></svg>
    <span className="flex-1 pr-[2px] text-center font-bold text-[#23282f]">{t}</span>
    <svg width="12" height="12" viewBox="0 0 12 12" className="-mt-[2px]"><path d="M1 1l10 10M11 1L1 11" stroke="#111" strokeWidth="1.900" /></svg>
  </div>
);

const Center = () => (
  <div className="flex flex-1 flex-col">
    <div className="flex h-[660px]">
      <LeftTools />
      <div className="relative flex w-[1187px] flex-col">
        <div className="flex h-[27px]"><Tab t="Mesh" active /><Tab t="Scaled Residuals" /><Tab t="drag-rplot" /><Tab t="lift-rplot" /></div>
        <div className="h-[600px] bg-[linear-gradient(180deg,#cbd3e3_0%,#e6e9f2_53%,#ffffff_100%)]"><Viewport /></div>
        <div className="absolute right-[7px] top-[33px] flex w-[116px] flex-col items-end font-['Open_Sans',sans-serif] font-bold text-black [font-stretch:normal]">
          <div className="flex h-[38px] items-start">
            <svg width="32" height="25" viewBox="0 0 31 27" preserveAspectRatio="none" className="mt-[2px]"><path d="M0 27L12 0h7L7.500 27zM14 8l4-8 13 27h-8z" /></svg>
            <span className="text-[35px] leading-[29px] tracking-[-0.200px]">nsys</span>
          </div>
          <div className="h-[21px] text-[17.500px] leading-[18px] tracking-[-0.200px]">2023 R1</div>
          <div className="mr-[2px] mt-px h-px w-[110px] bg-[#333]" />
          <div className="mr-[15px] mt-[2px] text-[17.500px] leading-[24px] tracking-[0.100px]">STUDENT</div>
        </div>
      </div>
      <RightTools />
    </div>
    <div className="-mt-[29px] flex h-[29px] items-center justify-end pb-[7px] pr-[5px]">
      <svg width="4" height="17" viewBox="0 0 4 17" className="ml-[9px] mr-auto"><path d="M.5 0v17M3.500 0v17" stroke="#9a9a9a" strokeDasharray="1 2.200" /></svg>
      <span className="mr-[2px] tracking-[-0.150px] text-black">0 selected</span>
      <div className="flex h-[23px] w-[167px] items-center justify-between rounded-[3px] border border-[#b8c2ce] bg-white pl-[5px] pr-[8px]"><span className="mt-[2px]">all</span><Caret /></div>
    </div>
    <div className="ml-[3px] flex h-[134px] flex-col bg-[#bfc3ca]">
      <div className="flex h-[26px] items-center justify-between pl-[9px] pr-[4px] font-bold text-[#66748b]">
        <span className="mt-px">Console</span>
        <span className="flex items-center gap-[6px] pb-[2px]">
          <svg width="11" height="11" viewBox="0 0 11 11" fill="none" stroke="#444"><rect x=".5" y=".5" width="10" height="10" rx="1.500" /><path d="M2.500 4.500h4v4h-4zM4.500 4.500v-2h4v4h-2" /></svg>
          <Chev />
        </span>
      </div>
      <div className="ml-px flex h-[102px] overflow-hidden rounded-[3px] bg-[#f8f8f8]">
        <pre className="-mt-[9px] flex-1 pl-[7px] font-['Liberation_Mono',monospace] text-[13.333px] leading-[16px] text-black">{"    y-velocity\n    hyb_init-0\n    hyb_init-1\nDone.\n\nCalculation complete.\n"}</pre>
        <div className="mr-[6px] flex h-[27px] w-[33px] items-center justify-center rounded-[3px] border border-[#aaa] bg-[#f6f6f6]">
          <svg width="18" height="17" viewBox="0 0 18 17" fill="none"><path d="M9 1l8 15H1z" stroke="#d99a14" strokeWidth="1.200" /><path d="M9 6v5M9 12.500v1.500" stroke="#666" strokeWidth="1.300" /></svg>
        </div>
        <div className="flex h-[27px] w-[32px] items-center justify-center border border-b-2 border-[#222] border-b-[#999] bg-[linear-gradient(180deg,#f5181c,#e86a6a)]">
          <svg width="18" height="18" viewBox="0 0 18 18" fill="none"><circle cx="9" cy="9" r="8" stroke="#2a0a0a" strokeWidth="1.200" /><path d="M9 5v8" stroke="#b5341c" /></svg>
        </div>
        <div className="flex w-[16px] flex-col">
          <div className="flex h-[21px] items-center justify-center bg-[#9dadb5]"><Arrow d="u" /></div>
          <div className="h-[26px] bg-[#c1cacd]" />
          <div className="h-[20px] bg-[#5b6171]" />
          <div className="flex h-[20px] items-center justify-center bg-[#9dadb5]"><Arrow d="d" /></div>
          <div className="flex h-[15px] items-center justify-center border-l border-[#888] bg-white"><svg width="11" height="11" viewBox="0 0 11 11"><path d="M1 5l3 5 6-9" fill="none" stroke="#111" strokeWidth="2.200" /></svg></div>
        </div>
      </div>
    </div>
  </div>
);

/* ---------- top bars ---------- */
const Cubes = ({ s = 20 }: { s?: number }) => (
  <svg width={s} height={s} viewBox="0 0 30 30">
    <rect width="30" height="30" fill="#000" />
    <g fill="none" stroke="#e0a32a" strokeWidth="1.200">
      {[[15, 5.5], [10.5, 13], [19.5, 13]].map(([x, y]) => (
        <path key={x} d={`M${x} ${y - 5}l4.500 2.500v5L${x} ${y + 5}l-4.500-2.500v-5zM${x - 4.5} ${y - 2.5}l4.500 2.500 4.500-2.500M${x} ${y}v5`} />
      ))}
    </g>
    <text x="6" y="29" fontSize="11" fontWeight="700" fill="#eee" fontFamily="Open Sans, sans-serif">WB</text>
  </svg>
);

const TitleBar = () => (
  <div className="flex h-[29px] items-center bg-[#0063b1] font-['Open_Sans',sans-serif] text-[14.500px] text-white [font-stretch:normal]">
    <svg width="20" height="20" viewBox="0 0 20 20" className="ml-[2px] mr-[6px]"><Bird c="#e0a32a" /></svg>
    <span className="whitespace-pre tracking-[-0.150px]">{"A:1-D Cylinder Parallel Fluent@LAPTOP-7K6J0Q5M  [2d, dp, pbns, lam, transient, 2-processes] [CFD Solver - Level 2]"}</span>
    <svg width="160" height="12" viewBox="0 0 160 12" className="ml-auto mr-[16px] shrink-0" fill="none" stroke="#fff" strokeWidth="1.100">
      <path d="M21 6h12M79.500 3.500h8v8h-8zM81.500 3.500V1.500q0-.5.5-.5H89q1 0 1 1v7q0 .5-.5.5h-2M138.500.5l11.500 11.500M150 .5L138.500 12" />
    </svg>
  </div>
);

const CubeGray = ({ c }: { c: string }) => (
  <g stroke="#777" strokeWidth=".6"><path d="M1 5l6-4 8 3v9l-6 4-8-4z" fill={c} /><path d="M1 5l8 3 6-4M9 8v9M1 9l8 4 6-4M4 6.500v9M12 6v9M5 2.500l8 3" fill="none" /></g>
);

const QuickBar = () => (
  <div className="flex h-[45px] items-center bg-[linear-gradient(180deg,#fcfcfc,#eeeeee)] pb-px shadow-[inset_0_-1px_0_#fff,inset_0_-2px_0_#b5b1ab]">
    <svg width="330" height="32" viewBox="0 0 330 32" fill="none">
      <g transform="translate(14.500 7.500)"><CubeGray c="#b9b9b9" /></g>
      <g transform="translate(54 7.500)"><CubeGray c="#a89b80" /><path d="M5 0h4v4h3L7 8 2 4h3z" fill="#c8452a" /><path d="M8 9l5 4.500 1.500-2 1.500 6.500h-6l1.500-2L7 11z" fill="#2fa32f" /></g>
      <g transform="translate(93 7.500)"><CubeGray c="#b3ab92" /><path d="M7 4h9v13H7z" fill="#dbe7fb" stroke="#3a6cc8" /><path d="M9 6h5M9 9h5M9 12h5M9 15h5" stroke="#3a6cc8" strokeDasharray="1.500 .6" /></g>
      <g transform="translate(133 8)" stroke="#a5a5a5" strokeWidth="2"><path d="M2 6q2-4 7-4l2 2M12 0v6H7M12 8q-2 5-7 5l-3-2M1 15V9h5" /></g>
      <path d="M178 7h7l-3 5h3l-8 12 1-7h-4z" fill="#ffe600" stroke="#8a7c00" strokeWidth=".7" />
      <g transform="translate(249 8)"><path d="M0 0h16v3H0z" fill="#0a6fd0" /><path d="M9 7h6M13 5l2 2-2 2M7 13H1M3 11l-2 2 2 2" stroke="#e02020" strokeWidth="1.400" /><path d="M2 12V5h3v3.500H2M10.500 16V10h3v3h-3" stroke="#0a6fd0" strokeWidth="1.300" /></g>
      <text x="287.500" y="15" fontSize="9" fontWeight="700" fill="#b02a10" fontFamily="Liberation Mono, monospace" textLength="11">MO</text>
      <path d="M299 9h4M299 13h4M290 18.500h13M290 22.500h13" stroke="#1010e0" strokeWidth="2" />
    </svg>
    <div className="-ml-[127px]"><Cubes s={30} /></div>
  </div>
);

const RIB_TABS = ["Physics", "User-Defined", "Solution", "Results", "View", "Parallel", "Design"];

const TabBar = () => (
  <div className="flex h-[35px] bg-[#334960] text-[12.700px] font-bold text-[#d5dbe3]">
    <div className="flex w-[76px] items-center justify-center pt-[2px]"><span><u>F</u>ile</span></div>
    <div className="flex w-[120px] items-center justify-center bg-[#f9f9f9] pt-[2px] text-[#2c3d52]">Domain</div>
    {RIB_TABS.map((t) => <div key={t} className="flex w-[120px] items-center justify-center pt-[3px]">{t}</div>)}
    <div className="flex w-[28px] items-center justify-center pb-px"><svg width="9" height="6"><path d="M0 5.500h9L4.500.5z" fill="#c5ccd6" /></svg></div>
    <div className="ml-auto mr-[34px] flex h-[34px] w-[180px] items-center gap-[4px] rounded-[4px] bg-[#1a242f] pl-[2px] font-normal text-[#98a1ab]">
      <svg width="17" height="17" viewBox="0 0 17 17" fill="none" stroke="#e4e8ec" strokeWidth="2.200"><circle cx="7" cy="7" r="5.500" /><path d="M11 11l5 5" strokeWidth="2.800" /></svg>
      <span className="mt-[2px]">Quick Search (Ct...</span>
    </div>
    <div className="flex w-[86px] items-center gap-[18px]">
      <svg width="18" height="18" viewBox="0 0 18 18" fill="none"><circle cx="9" cy="9" r="8" stroke="#bfc8d2" strokeWidth="1.200" /><text x="6.200" y="13.300" fontSize="12" fontWeight="700" fill={G} fontFamily="Open Sans, sans-serif">?</text></svg>
      <svg width="19" height="18" viewBox="0 0 19 18" fill="none"><path d="M0 0h19v3H0zM0 4h4v14H0z" fill="#dfe4ea" /><path d="M6 5h12v3H6zM6 9.500h12v3H6zM6 14h12v3.500H6z" stroke={G} strokeWidth="1.200" /></svg>
    </div>
    <div className="flex w-[67px] items-center justify-center bg-black font-['Open_Sans',sans-serif] text-[16.500px] text-white [font-stretch:normal]">
      <svg width="15" height="13" viewBox="0 0 15 13"><path d="M0 13L5.500 0h3L3.500 13z" fill="#ffb71b" /><path d="M6.800 4L8.500 0 15 13h-4z" fill="#fff" /></svg>
      <span className="leading-[18px] tracking-[-0.200px]">nsys</span>
    </div>
  </div>
);

/* ---------- taskbar ---------- */
const APPS: React.ReactNode[] = [
  <g transform="translate(-1 0)"><path d="M0 0h14.300v14.300H0zM15.700 0H30v14.300H15.700zM0 15.700h14.300V30H0zM15.700 15.700H30V30H15.700z" fill="#35b7f7" /></g>,
  <g fill="none"><circle cx="13" cy="12" r="10.500" fill="#555" stroke="#e8e8e8" strokeWidth="2.500" /><path d="M20 20l7 8" stroke="#cfd4da" strokeWidth="3.500" /></g>,
  <g><path d="M4 2h9q3 0 2 4l-4 11q-1 3-4 3H4q-5 0-4-4z" fill="#2a8fe6" /><path d="M0 16L4 7l4 10q-1 3-4 3H4q-4 0-4-4z" fill="#8fc23a" /><path d="M13 2h5q2 0 3 3l1 4h-7z" fill="#1b66c9" /><path d="M17 8h9q3 0 2 4l-3 9H13z" fill="#c25be0" /><path d="M20 14h8l-3 8h-8z" fill="#f26d8a" /><rect x="6" y="19" width="23" height="10" rx="2" fill="#ffc914" /><text x="9" y="27.500" fontSize="8.500" fontWeight="700" fill="#111" fontFamily="Open Sans, sans-serif" textLength="17">PRE</text></g>,
  <g><path d="M8 1h22v20H8z" fill="#f2f2f2" /><path d="M0 8h22v20H0z" fill="#6c6c6c" opacity=".9" /><path d="M8 8h14v13H8z" fill="#a8a8a8" /></g>,
  <g><circle cx="15" cy="15" r="14" fill="#6d63c7" /><path d="M2 29l2-9 8 8z" fill="#5a4fc0" /><path d="M2 29q12 2 20-5L5 18z" fill="#5b51bd" /><rect x="6" y="9" width="13" height="11" rx="2" fill="#fff" /><path d="M20 13l4-3v9l-4-3z" fill="#fff" /></g>,
  <g><circle cx="15" cy="15" r="15" fill="#1b74cf" /><path d="M1 11Q5 0 16 0q13 1 14 13 0 7-8 7-4 0-3-3 1-9-7-10Q5 7 1 11z" fill="#3cc8c0" /><path d="M24 3q6 4 6 11-1 6-8 6-4 0-3-3 4-8 5-14z" fill="#6fdc5a" /><path d="M12 12q-4 6 1 12t13 1q-6 7-15 4-6-6-2-14z" fill="#0c4a94" /></g>,
  <g><path d="M0 3h11l3 4h16v20H0z" fill="#e6a210" /><path d="M0 8h30v20H0z" fill="#ffd257" /><path d="M6 21h19v7H6z" fill="#1272c8" /><path d="M10 24h11" stroke="#0b4c8c" strokeWidth="1.500" /></g>,
  <g><path d="M15 1l15 9H0z" fill="#0b5cab" /><path d="M0 10h30v18H0z" fill="#38bdf5" /><path d="M0 10l15 11L30 10z" fill="#f0f0f0" /><path d="M0 28l15-9 15 9z" fill="#1e90e0" /></g>,
  <g><path d="M0 0h30v30H0z" fill="#24a8dc" /><path d="M7 26L11 4v20z" fill="#0a2a4a" /><text x="9" y="23" fontSize="24" fill="#fff" fontWeight="700" fontFamily="Open Sans, sans-serif">L</text></g>,
  <g><rect width="30" height="30" rx="2" fill="#107c10" /><circle cx="15" cy="15" r="12" fill="#fff" /><path d="M15 10q-9 8-9 14M15 10q9 8 9 14M8 5q5 1 7 4 3-3 7-4" stroke="#107c10" strokeWidth="2.600" fill="none" /></g>,
  <g fill="none"><ellipse cx="15" cy="15" rx="11" ry="12.500" stroke="#e8232e" strokeWidth="5" /><path d="M19 3q8 4 8 12t-8 12" stroke="#ff5c56" strokeWidth="3" /></g>,
  <g><circle cx="16" cy="6" r="5" fill="#7b83eb" /><circle cx="25" cy="7" r="3.500" fill="#5059c9" /><path d="M9 12h14v10q-1 6-7 6t-7-6z" fill="#7b83eb" /><path d="M24 12h6v8q-1 4-5 4z" fill="#5059c9" /><rect x="0" y="7" width="15" height="15" rx="1" fill="#4b53bc" /><text x="4" y="19" fontSize="12" fontWeight="700" fill="#fff" fontFamily="Open Sans, sans-serif">T</text></g>,
  <g><circle cx="15" cy="15" r="13" fill="#0a9be6" /><circle cx="8" cy="8" r="7" fill="#12b0f0" /><circle cx="22" cy="22" r="7" fill="#0a86dc" /><text x="9.500" y="22" fontSize="20" fontWeight="700" fill="#fff" fontFamily="Open Sans, sans-serif">S</text></g>,
  <g><circle cx="15" cy="15" r="15" fill="#f0357f" /><path d="M0 14Q1 0 15 0t15 12q-8-6-14-1T0 14z" fill="#b04cf0" /><path d="M6 9l5 12 4-10 4 10 5-10M10 9h8" stroke="#fff" strokeWidth="2.200" fill="none" /><path d="M24 3v5M21.500 5.500h5" stroke="#fff" /></g>,
  <g><path d="M7 1h16l5 6-3 16-10 7L5 23 2 7z" fill="#fb4a1c" /><path d="M9 6l6 1 6-1 3 5-3 6-1 5-5 3-5-3-1-5-3-6z" fill="#fff" /><path d="M9 10l4 2M21 10l-4 2M15 12v5M12 18l3 2 3-2" stroke="#fb4a1c" strokeWidth="1.700" fill="none" /></g>,
  <g><circle cx="15" cy="15" r="15" fill="#fbc116" /><path d="M2 7.500A15 15 0 0 1 28 7.500L15 9l-6 9z" fill="#ea4335" /><path d="M2 7.500A15 15 0 0 0 14 30l6-11-10 0z" fill="#34a853" /><circle cx="15" cy="15" r="7" fill="#fff" /><circle cx="15" cy="15" r="5.500" fill="#4285f4" /></g>,
  <g><circle cx="15" cy="17" r="13" fill="#ff4a4a" /><path d="M2 12Q4 6 7 5q2 3 6 4 3-6 7-9 1 6 6 9 4 9-1 15-9 8-18 2Q1 20 2 12z" fill="#ff7a2a" /><path d="M18 2q1 6 7 9 4 8-2 14 3-9-5-14-3-5 0-9z" fill="#ffe14a" /><circle cx="14" cy="17" r="6" fill="#7a4be0" /></g>,
  <g><path d="M0 16l5-5 8 8-6 6z" fill="#1b5fc2" /><path d="M7 25L24 3l6 5-18 20z" fill="#3fa2f2" /></g>,
  <g><circle cx="15" cy="15" r="11.500" fill="#858f9a" /><circle cx="15" cy="15" r="12.500" fill="none" stroke="#858f9a" strokeWidth="5" strokeDasharray="6.500 6.590" strokeDashoffset="3.250" /><circle cx="15" cy="15" r="6.500" fill="#dfe8f0" /><circle cx="15" cy="15" r="5" fill="#0f62b5" /></g>,
];

const Taskbar = () => (
  <div className="flex h-[60px] items-center bg-[#1c1c1c] font-['Open_Sans',sans-serif] text-white shadow-[inset_0_1px_0_#3a3d3a] [font-stretch:normal]">
    <div className="flex w-[333px] items-start pl-[11px]">
      <svg width="30" height="28" viewBox="0 0 30 28" fill="none"><path d="M3 10a12 12 0 0 0 23 7Q18 20 14 15T13 4Q5 4 3 10z" fill="#f5a623" /><path d="M1 17h19M4 21h20M8 25h12" stroke="#d9dde2" strokeWidth="2" strokeLinecap="round" /></svg>
      <span className="-ml-[13px] -mt-[4px] text-[12.500px] leading-[16px]">30°</span>
    </div>
    {[...APPS, "wb", "fluent"].map((a, i) => (
      <div key={i} className={"mx-[4px] flex h-[50px] w-[47px] shrink-0 flex-col items-center rounded-[5px] pt-[10px] " + (i === 20 ? "bg-[#2b2b2b]" : "")}>
        {a === "wb" ? <Cubes s={30} /> : a === "fluent" ? <svg width="30" height="30" viewBox="0 0 20 20"><Bird c="#f0b030" /></svg> : <svg width="30" height="30" viewBox="-0.500 -0.500 31 31">{a}</svg>}
        {[6, 16, 18, 19].includes(i) && <span className="mt-[5px] h-[3px] w-[7px] rounded-full bg-[#9a9a9a]" />}
        {i === 20 && <span className="mt-[5px] h-[3px] w-[19px] rounded-full bg-[#5fb2f2]" />}
      </div>
    ))}
    <svg width="119" height="30" viewBox="0 0 119 30" fill="none" className="ml-[22px] shrink-0">
      <path d="M7 18l6-6 6 6" stroke="#fff" strokeWidth="1.800" />
      <circle cx="53.500" cy="15" r="9.500" fill="#35aee0" stroke="#e8f6fc" /><text x="50" y="19.500" fontSize="13" fontWeight="700" fill="#fff" fontFamily="Open Sans, sans-serif">L</text>
      <path d="M86 14l5-7 8 3-3 5 2 8-6-1-1-5z" fill="#fff" /><path d="M93 12l3 2-3 2" stroke="#1c1c1c" />
    </svg>
    <div className="ml-[2px] w-[40px] shrink-0 text-center text-[14.500px] leading-[20px] tracking-[-0.400px]">ENG<br />IN</div>
    <svg width="84" height="24" viewBox="0 0 84 24" fill="none" stroke="#fff" strokeWidth="1.500" className="ml-[15px] shrink-0">
      <path d="M13 3H3v15h16v-6M8 21h8M10 18v3M14 18v3M15.500 3h5v6h-5zM18 9v4" />
      <path d="M32 9h3l4-4v14l-4-4h-3zM42 9q2 3 0 6M45 7q3.500 5 0 10M48 5q5 7 0 14" />
      <path d="M64 8h15v11H64zM81 11.500v4" /><path d="M68 11h9v6H65z" fill="#fff" /><path d="M64 2l-2 5h4l-3 5" strokeWidth="1.800" />
    </svg>
    <div className="ml-auto text-right text-[14.500px] leading-[20px] tracking-[-0.400px]">16:20<br />14-10-2023</div>
    <svg width="17" height="20" viewBox="0 0 17 20" className="ml-[11px] mr-[26px] shrink-0"><path d="M8.500 0q6 0 6 7v5l2 3.500H.5l2-3.500V7q0-7 6-7zM6 17h5q-.5 2.500-2.500 2.500T6 17z" fill="#6cbcf6" /></svg>
  </div>
);

export default function App() {
  return (
    <div className="relative flex h-[1080px] w-[1920px] flex-col overflow-hidden bg-white font-['DejaVu_Sans_Condensed','DejaVu_Sans',sans-serif] text-[12.700px] leading-[16px] text-black [font-stretch:condensed] [&_svg]:[font-stretch:normal]">
      <TitleBar />
      <QuickBar />
      <TabBar />
      <Ribbon />
      <div className="mt-[3px] flex h-[794px]">
        <Outline />
        <TaskPage />
        <Center />
      </div>
      <Taskbar />
      <div className="absolute left-[1728px] top-[31px] h-[49px] w-[138px] bg-[#28601e] pl-[4px] pt-px font-['Open_Sans',sans-serif] text-[17px] leading-[23px] tracking-[-0.300px] text-[#f2f2f2] [font-stretch:normal]">
        {["47.3 Kbps", "0.0 Kbps"].map((t, i) => (
          <div key={t} className="flex items-center gap-[5px]">
            <svg width="7" height="13" viewBox="0 0 7 13"><path d={i ? "M3.500 13V2M.8 4.500L3.500 1.500l2.700 3" : "M3.500 0v11M.8 8.500l2.700 3 2.700-3"} stroke="#f8f800" strokeWidth="2" fill="none" /></svg>{t}
          </div>
        ))}
      </div>
    </div>
  );
}
